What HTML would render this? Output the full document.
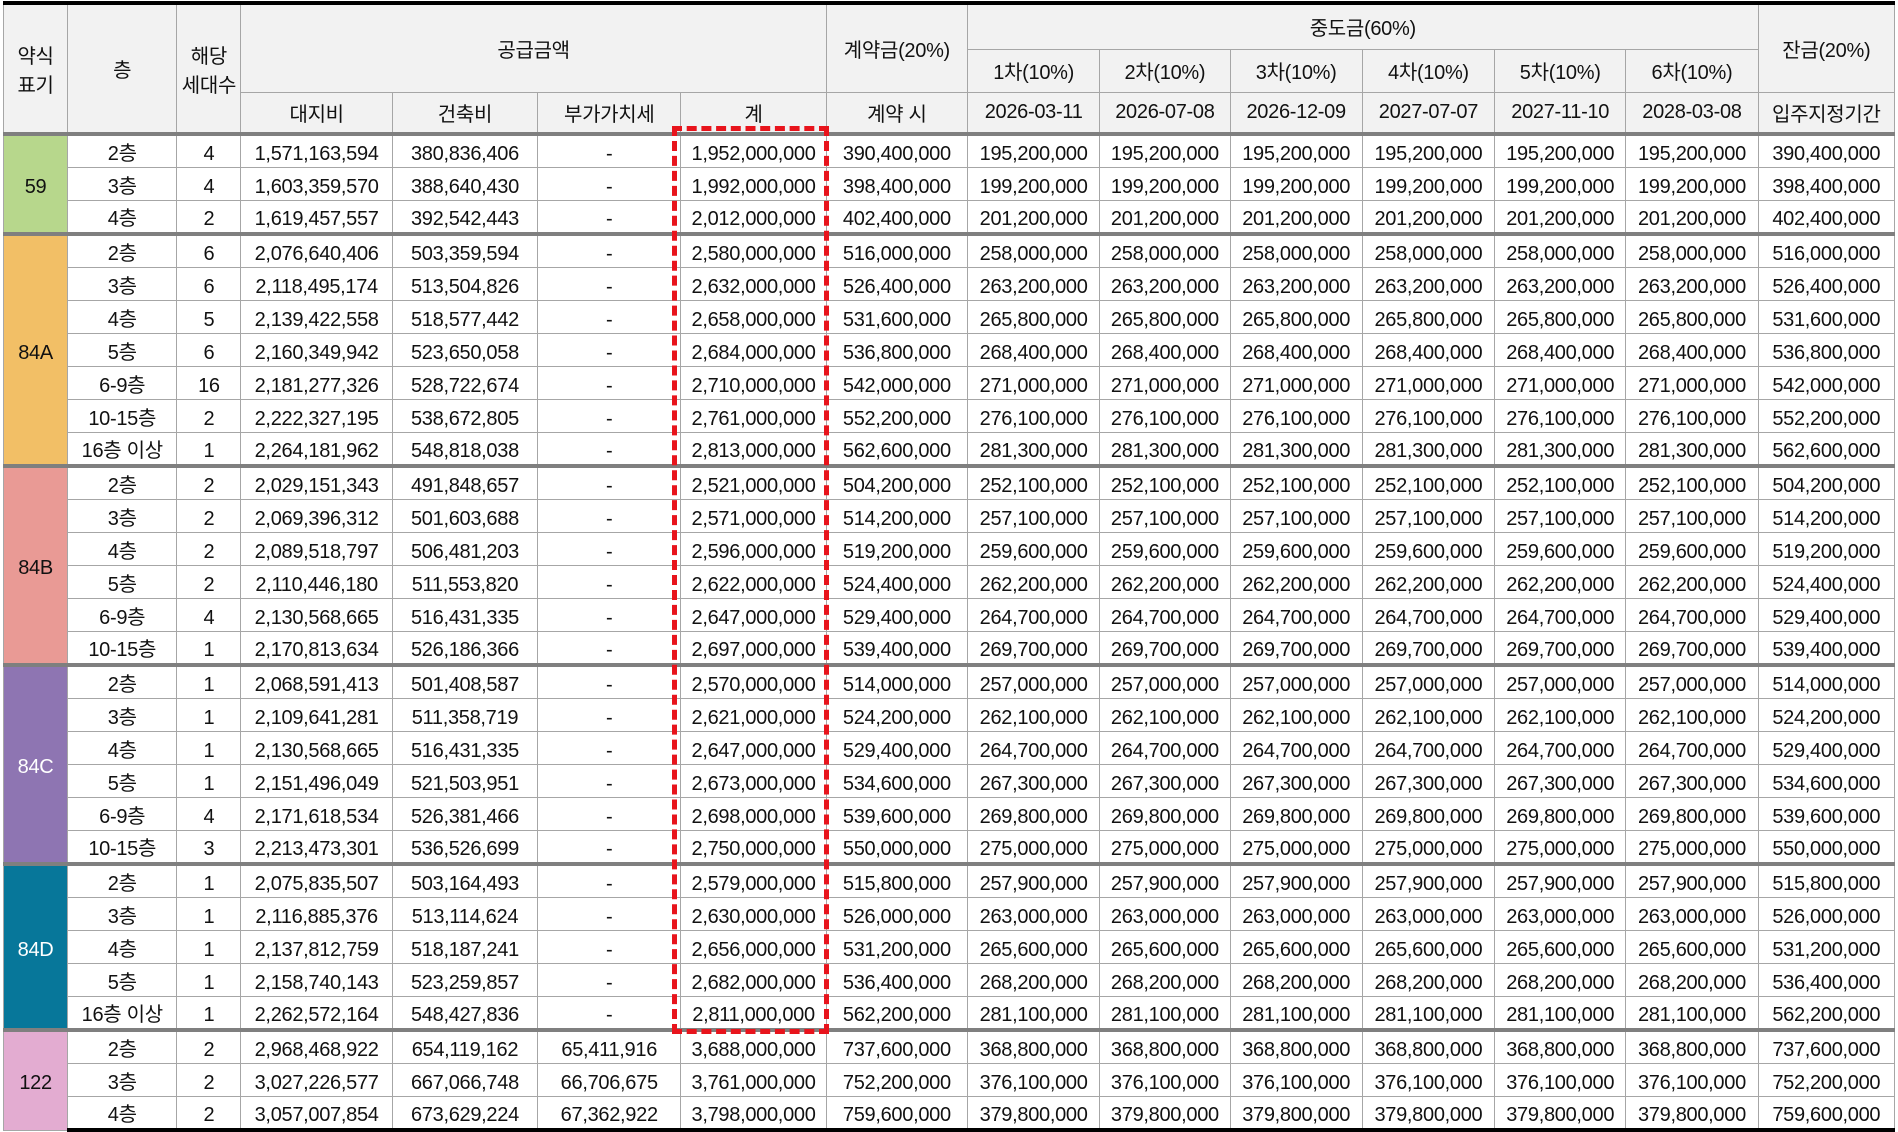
<!DOCTYPE html>
<html><head><meta charset="utf-8">
<style>
html,body{margin:0;padding:0;background:#fff;width:1898px;height:1125px;overflow:hidden}
body{font-family:"Liberation Sans","Noto Sans CJK KR",sans-serif;color:#111}
table{position:absolute;left:3px;top:1px;border-collapse:collapse;table-layout:fixed;width:1892px}
td,th{border:1px solid #a6a6a6;text-align:center;font-size:20px;font-weight:normal;padding:0;white-space:nowrap;overflow:hidden;letter-spacing:-0.3px}
tbody td{padding-top:5px;line-height:26px}
thead tr:first-child th{border-top:4px solid #000}
th{background:#f2f2f2}
tbody tr{height:33px}
tr.g td{border-top:4px solid #7f7f7f}
thead tr:last-child th{border-bottom:4px solid #7f7f7f}
tbody tr:last-child td{border-bottom:4px solid #000}
#box{position:absolute;left:672px;top:126px;width:147px;height:898px;border:5px dashed #e8141c}
</style></head><body>
<table>
<colgroup><col style="width:64px"><col style="width:109px"><col style="width:64px"><col style="width:151px"><col style="width:145px"><col style="width:143px"><col style="width:145px"><col style="width:141px"><col style="width:132px"><col style="width:130px"><col style="width:132px"><col style="width:132px"><col style="width:131px"><col style="width:132px"><col style="width:136px"></colgroup>
<thead>
<tr style="height:46px"><th rowspan="3">약식<br>표기</th><th rowspan="3">층</th><th rowspan="3">해당<br>세대수</th><th colspan="4" rowspan="2">공급금액</th><th rowspan="2">계약금(20%)</th><th colspan="6">중도금(60%)</th><th rowspan="2">잔금(20%)</th></tr>
<tr style="height:43px"><th>1차(10%)</th><th>2차(10%)</th><th>3차(10%)</th><th>4차(10%)</th><th>5차(10%)</th><th>6차(10%)</th></tr>
<tr style="height:42px"><th>대지비</th><th>건축비</th><th>부가가치세</th><th>계</th><th>계약 시</th><th>2026-03-11</th><th>2026-07-08</th><th>2026-12-09</th><th>2027-07-07</th><th>2027-11-10</th><th>2028-03-08</th><th>입주지정기간</th></tr>
</thead>
<tbody>
<tr class="g"><td rowspan="3" style="background:#b7d78c">59</td><td>2층</td><td>4</td><td>1,571,163,594</td><td>380,836,406</td><td>-</td><td>1,952,000,000</td><td>390,400,000</td><td>195,200,000</td><td>195,200,000</td><td>195,200,000</td><td>195,200,000</td><td>195,200,000</td><td>195,200,000</td><td>390,400,000</td></tr>
<tr><td>3층</td><td>4</td><td>1,603,359,570</td><td>388,640,430</td><td>-</td><td>1,992,000,000</td><td>398,400,000</td><td>199,200,000</td><td>199,200,000</td><td>199,200,000</td><td>199,200,000</td><td>199,200,000</td><td>199,200,000</td><td>398,400,000</td></tr>
<tr><td>4층</td><td>2</td><td>1,619,457,557</td><td>392,542,443</td><td>-</td><td>2,012,000,000</td><td>402,400,000</td><td>201,200,000</td><td>201,200,000</td><td>201,200,000</td><td>201,200,000</td><td>201,200,000</td><td>201,200,000</td><td>402,400,000</td></tr>
<tr class="g"><td rowspan="7" style="background:#f2bf66">84A</td><td>2층</td><td>6</td><td>2,076,640,406</td><td>503,359,594</td><td>-</td><td>2,580,000,000</td><td>516,000,000</td><td>258,000,000</td><td>258,000,000</td><td>258,000,000</td><td>258,000,000</td><td>258,000,000</td><td>258,000,000</td><td>516,000,000</td></tr>
<tr><td>3층</td><td>6</td><td>2,118,495,174</td><td>513,504,826</td><td>-</td><td>2,632,000,000</td><td>526,400,000</td><td>263,200,000</td><td>263,200,000</td><td>263,200,000</td><td>263,200,000</td><td>263,200,000</td><td>263,200,000</td><td>526,400,000</td></tr>
<tr><td>4층</td><td>5</td><td>2,139,422,558</td><td>518,577,442</td><td>-</td><td>2,658,000,000</td><td>531,600,000</td><td>265,800,000</td><td>265,800,000</td><td>265,800,000</td><td>265,800,000</td><td>265,800,000</td><td>265,800,000</td><td>531,600,000</td></tr>
<tr><td>5층</td><td>6</td><td>2,160,349,942</td><td>523,650,058</td><td>-</td><td>2,684,000,000</td><td>536,800,000</td><td>268,400,000</td><td>268,400,000</td><td>268,400,000</td><td>268,400,000</td><td>268,400,000</td><td>268,400,000</td><td>536,800,000</td></tr>
<tr><td>6-9층</td><td>16</td><td>2,181,277,326</td><td>528,722,674</td><td>-</td><td>2,710,000,000</td><td>542,000,000</td><td>271,000,000</td><td>271,000,000</td><td>271,000,000</td><td>271,000,000</td><td>271,000,000</td><td>271,000,000</td><td>542,000,000</td></tr>
<tr><td>10-15층</td><td>2</td><td>2,222,327,195</td><td>538,672,805</td><td>-</td><td>2,761,000,000</td><td>552,200,000</td><td>276,100,000</td><td>276,100,000</td><td>276,100,000</td><td>276,100,000</td><td>276,100,000</td><td>276,100,000</td><td>552,200,000</td></tr>
<tr><td>16층 이상</td><td>1</td><td>2,264,181,962</td><td>548,818,038</td><td>-</td><td>2,813,000,000</td><td>562,600,000</td><td>281,300,000</td><td>281,300,000</td><td>281,300,000</td><td>281,300,000</td><td>281,300,000</td><td>281,300,000</td><td>562,600,000</td></tr>
<tr class="g"><td rowspan="6" style="background:#e99a95">84B</td><td>2층</td><td>2</td><td>2,029,151,343</td><td>491,848,657</td><td>-</td><td>2,521,000,000</td><td>504,200,000</td><td>252,100,000</td><td>252,100,000</td><td>252,100,000</td><td>252,100,000</td><td>252,100,000</td><td>252,100,000</td><td>504,200,000</td></tr>
<tr><td>3층</td><td>2</td><td>2,069,396,312</td><td>501,603,688</td><td>-</td><td>2,571,000,000</td><td>514,200,000</td><td>257,100,000</td><td>257,100,000</td><td>257,100,000</td><td>257,100,000</td><td>257,100,000</td><td>257,100,000</td><td>514,200,000</td></tr>
<tr><td>4층</td><td>2</td><td>2,089,518,797</td><td>506,481,203</td><td>-</td><td>2,596,000,000</td><td>519,200,000</td><td>259,600,000</td><td>259,600,000</td><td>259,600,000</td><td>259,600,000</td><td>259,600,000</td><td>259,600,000</td><td>519,200,000</td></tr>
<tr><td>5층</td><td>2</td><td>2,110,446,180</td><td>511,553,820</td><td>-</td><td>2,622,000,000</td><td>524,400,000</td><td>262,200,000</td><td>262,200,000</td><td>262,200,000</td><td>262,200,000</td><td>262,200,000</td><td>262,200,000</td><td>524,400,000</td></tr>
<tr><td>6-9층</td><td>4</td><td>2,130,568,665</td><td>516,431,335</td><td>-</td><td>2,647,000,000</td><td>529,400,000</td><td>264,700,000</td><td>264,700,000</td><td>264,700,000</td><td>264,700,000</td><td>264,700,000</td><td>264,700,000</td><td>529,400,000</td></tr>
<tr><td>10-15층</td><td>1</td><td>2,170,813,634</td><td>526,186,366</td><td>-</td><td>2,697,000,000</td><td>539,400,000</td><td>269,700,000</td><td>269,700,000</td><td>269,700,000</td><td>269,700,000</td><td>269,700,000</td><td>269,700,000</td><td>539,400,000</td></tr>
<tr class="g"><td rowspan="6" style="background:#8e75b2;color:#fff">84C</td><td>2층</td><td>1</td><td>2,068,591,413</td><td>501,408,587</td><td>-</td><td>2,570,000,000</td><td>514,000,000</td><td>257,000,000</td><td>257,000,000</td><td>257,000,000</td><td>257,000,000</td><td>257,000,000</td><td>257,000,000</td><td>514,000,000</td></tr>
<tr><td>3층</td><td>1</td><td>2,109,641,281</td><td>511,358,719</td><td>-</td><td>2,621,000,000</td><td>524,200,000</td><td>262,100,000</td><td>262,100,000</td><td>262,100,000</td><td>262,100,000</td><td>262,100,000</td><td>262,100,000</td><td>524,200,000</td></tr>
<tr><td>4층</td><td>1</td><td>2,130,568,665</td><td>516,431,335</td><td>-</td><td>2,647,000,000</td><td>529,400,000</td><td>264,700,000</td><td>264,700,000</td><td>264,700,000</td><td>264,700,000</td><td>264,700,000</td><td>264,700,000</td><td>529,400,000</td></tr>
<tr><td>5층</td><td>1</td><td>2,151,496,049</td><td>521,503,951</td><td>-</td><td>2,673,000,000</td><td>534,600,000</td><td>267,300,000</td><td>267,300,000</td><td>267,300,000</td><td>267,300,000</td><td>267,300,000</td><td>267,300,000</td><td>534,600,000</td></tr>
<tr><td>6-9층</td><td>4</td><td>2,171,618,534</td><td>526,381,466</td><td>-</td><td>2,698,000,000</td><td>539,600,000</td><td>269,800,000</td><td>269,800,000</td><td>269,800,000</td><td>269,800,000</td><td>269,800,000</td><td>269,800,000</td><td>539,600,000</td></tr>
<tr><td>10-15층</td><td>3</td><td>2,213,473,301</td><td>536,526,699</td><td>-</td><td>2,750,000,000</td><td>550,000,000</td><td>275,000,000</td><td>275,000,000</td><td>275,000,000</td><td>275,000,000</td><td>275,000,000</td><td>275,000,000</td><td>550,000,000</td></tr>
<tr class="g"><td rowspan="5" style="background:#07779a;color:#fff">84D</td><td>2층</td><td>1</td><td>2,075,835,507</td><td>503,164,493</td><td>-</td><td>2,579,000,000</td><td>515,800,000</td><td>257,900,000</td><td>257,900,000</td><td>257,900,000</td><td>257,900,000</td><td>257,900,000</td><td>257,900,000</td><td>515,800,000</td></tr>
<tr><td>3층</td><td>1</td><td>2,116,885,376</td><td>513,114,624</td><td>-</td><td>2,630,000,000</td><td>526,000,000</td><td>263,000,000</td><td>263,000,000</td><td>263,000,000</td><td>263,000,000</td><td>263,000,000</td><td>263,000,000</td><td>526,000,000</td></tr>
<tr><td>4층</td><td>1</td><td>2,137,812,759</td><td>518,187,241</td><td>-</td><td>2,656,000,000</td><td>531,200,000</td><td>265,600,000</td><td>265,600,000</td><td>265,600,000</td><td>265,600,000</td><td>265,600,000</td><td>265,600,000</td><td>531,200,000</td></tr>
<tr><td>5층</td><td>1</td><td>2,158,740,143</td><td>523,259,857</td><td>-</td><td>2,682,000,000</td><td>536,400,000</td><td>268,200,000</td><td>268,200,000</td><td>268,200,000</td><td>268,200,000</td><td>268,200,000</td><td>268,200,000</td><td>536,400,000</td></tr>
<tr><td>16층 이상</td><td>1</td><td>2,262,572,164</td><td>548,427,836</td><td>-</td><td>2,811,000,000</td><td>562,200,000</td><td>281,100,000</td><td>281,100,000</td><td>281,100,000</td><td>281,100,000</td><td>281,100,000</td><td>281,100,000</td><td>562,200,000</td></tr>
<tr class="g"><td rowspan="3" style="background:#e3acd1">122</td><td>2층</td><td>2</td><td>2,968,468,922</td><td>654,119,162</td><td>65,411,916</td><td>3,688,000,000</td><td>737,600,000</td><td>368,800,000</td><td>368,800,000</td><td>368,800,000</td><td>368,800,000</td><td>368,800,000</td><td>368,800,000</td><td>737,600,000</td></tr>
<tr><td>3층</td><td>2</td><td>3,027,226,577</td><td>667,066,748</td><td>66,706,675</td><td>3,761,000,000</td><td>752,200,000</td><td>376,100,000</td><td>376,100,000</td><td>376,100,000</td><td>376,100,000</td><td>376,100,000</td><td>376,100,000</td><td>752,200,000</td></tr>
<tr><td>4층</td><td>2</td><td>3,057,007,854</td><td>673,629,224</td><td>67,362,922</td><td>3,798,000,000</td><td>759,600,000</td><td>379,800,000</td><td>379,800,000</td><td>379,800,000</td><td>379,800,000</td><td>379,800,000</td><td>379,800,000</td><td>759,600,000</td></tr>
</tbody></table>
<div id="box"></div>
</body></html>
